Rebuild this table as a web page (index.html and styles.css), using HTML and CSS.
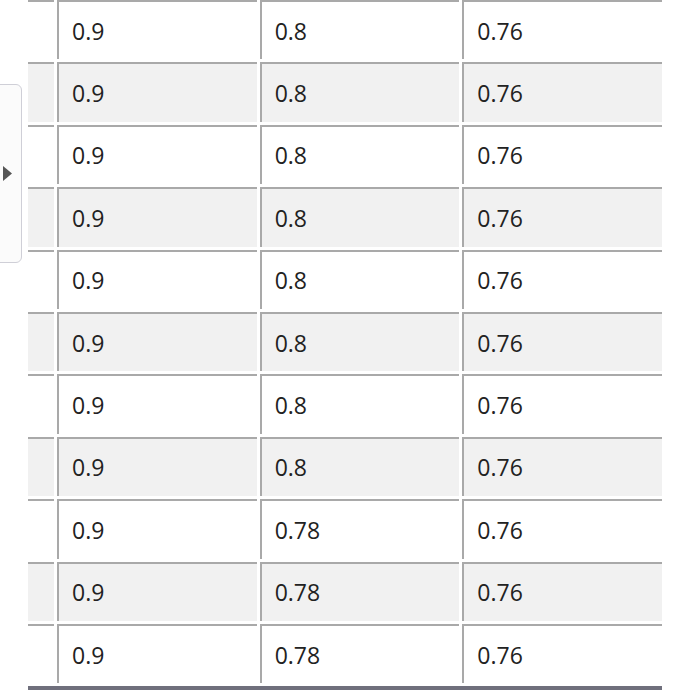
FILE: index.html
```html
<!DOCTYPE html>
<html lang="en">
<head>
<meta charset="utf-8">
<title>Values</title>
<link rel="stylesheet" href="styles.css">
</head>
<body>
<div class="page">
  <button class="side-toggle" aria-label="Open panel">
    <svg width="9" height="15" viewBox="0 0 9 15"><polygon points="0,0 9,7.5 0,15" fill="#555"/></svg>
  </button>
  <table class="data">
    <colgroup><col class="c-idx"><col><col><col></colgroup>
    <tbody>
      <tr><td class="idx"></td><td>0.9</td><td>0.8</td><td>0.76</td></tr>
      <tr class="alt"><td class="idx"></td><td>0.9</td><td>0.8</td><td>0.76</td></tr>
      <tr><td class="idx"></td><td>0.9</td><td>0.8</td><td>0.76</td></tr>
      <tr class="alt"><td class="idx"></td><td>0.9</td><td>0.8</td><td>0.76</td></tr>
      <tr><td class="idx"></td><td>0.9</td><td>0.8</td><td>0.76</td></tr>
      <tr class="alt"><td class="idx"></td><td>0.9</td><td>0.8</td><td>0.76</td></tr>
      <tr><td class="idx"></td><td>0.9</td><td>0.8</td><td>0.76</td></tr>
      <tr class="alt"><td class="idx"></td><td>0.9</td><td>0.8</td><td>0.76</td></tr>
      <tr><td class="idx"></td><td>0.9</td><td>0.78</td><td>0.76</td></tr>
      <tr class="alt"><td class="idx"></td><td>0.9</td><td>0.78</td><td>0.76</td></tr>
      <tr><td class="idx"></td><td>0.9</td><td>0.78</td><td>0.76</td></tr>
    </tbody>
    <tfoot>
      <tr class="foot"><td colspan="4"></td></tr>
    </tfoot>
  </table>
</div>
</body>
</html>
```

FILE: styles.css
```css
html, body {
  margin: 0;
  padding: 0;
  background: #ffffff;
}

.page {
  position: relative;
  width: 674px;
  height: 700px;
  overflow: hidden;
  font-family: "Open Sans", "Noto Sans", sans-serif;
}

.side-toggle {
  position: absolute;
  left: -8px;
  top: 84px;
  width: 30px;
  height: 179px;
  box-sizing: border-box;
  border: 1px solid #cfcfd7;
  border-radius: 6px;
  background: #fbfbfb;
  padding: 0 9px 0 0;
  display: flex;
  align-items: center;
  justify-content: flex-end;
  cursor: pointer;
}

.data {
  border-collapse: separate;
  border-spacing: 3px;
  table-layout: fixed;
  width: 640px;
  margin: -3px 0 0 25px;
}

.c-idx {
  width: 26px;
}

.data tbody tr {
  height: 59.4px;
}

.data td {
  box-sizing: border-box;
  padding: 0 0 0 13px;
  border-top: 2px solid #a9a9a9;
  border-left: 2px solid #a9a9a9;
  font-size: 23px;
  color: #222;
  vertical-align: middle;
  background: #ffffff;
}

.data td.idx {
  border-left: none;
  padding: 0;
}

.data tr.alt td {
  background: #f1f1f1;
}

.data tr.foot td {
  height: 4px;
  padding: 0;
  border: none;
  background: #6f6f7c;
}
```
